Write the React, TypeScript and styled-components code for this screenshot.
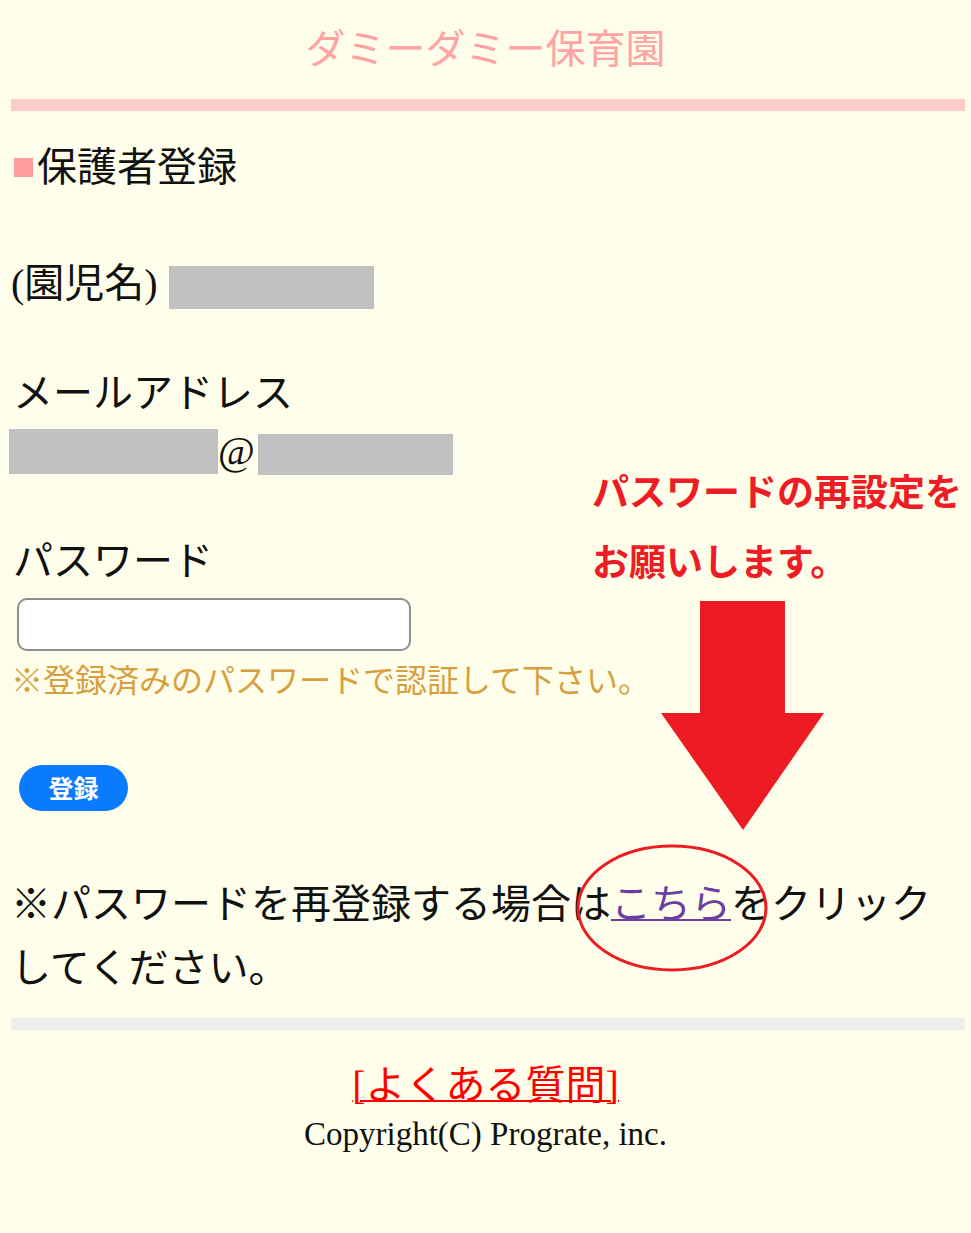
import styled, { createGlobalStyle } from 'styled-components';

const GlobalStyle = createGlobalStyle`
  body {
    margin: 0;
    background-color: #fffeeb;
  }
`;

const serif = `"Liberation Serif", "Noto Sans CJK JP", serif`;
const sans = `"Noto Sans CJK JP", "Noto Sans", sans-serif`;

const Page = styled.div`
  position: relative;
  min-height: 1233px;
  background-color: #fffeeb;
  font-family: ${serif};
  color: #111;
`;

const Header = styled.header`
  height: 99px;
  display: flex;
  align-items: center;
  justify-content: center;

  h1 {
    margin: 0;
    font-size: 40px;
    font-weight: 400;
    line-height: 50px;
    color: #ffa3a3;
  }
`;

const Bar = styled.div<{ $colour: string; $top?: number }>`
  height: 12px;
  margin: ${(p) => p.$top ?? 0}px 6px 0 11px;
  background-color: ${(p) => p.$colour};
`;

const Main = styled.main`
  padding: 0 6px 0 11px;
`;

const Heading = styled.h2`
  display: flex;
  align-items: center;
  margin: 28px 0 0;
  height: 50px;
  font-size: 40px;
  font-weight: 400;

  &::before {
    content: '';
    width: 19px;
    height: 19px;
    margin: 6px 4px 0 3px;
    background-color: #ff9c9c;
  }
`;

const Label = styled.div<{ $top: number }>`
  margin-top: ${(p) => p.$top}px;
  font-size: 40px;
  line-height: 50px;
  padding-left: 2px;
`;

const Row = styled.div<{ $top: number }>`
  display: flex;
  align-items: center;
  margin-top: ${(p) => p.$top}px;
  font-size: 40px;
  line-height: 50px;
`;

const Masked = styled.span<{ $w: number; $h: number; $shift?: number }>`
  display: inline-block;
  width: ${(p) => p.$w}px;
  height: ${(p) => p.$h}px;
  margin-top: ${(p) => p.$shift ?? 0}px;
  background-color: #c0c0c0;
`;

const PasswordInput = styled.input`
  display: block;
  box-sizing: border-box;
  width: 394px;
  height: 53px;
  margin: 11px 0 0 6px;
  border: 2px solid #8e8e8e;
  border-radius: 10px;
  background-color: #fff;
`;

const Hint = styled.p`
  margin: 10px 0 0;
  font-size: 32px;
  line-height: 40px;
  color: #d6a040;
`;

const SubmitButton = styled.button`
  display: block;
  margin: 64px 0 0 8px;
  padding: 0 0 3px;
  width: 109px;
  height: 46px;
  border: 0;
  border-radius: 23px;
  background-color: #0a7bff;
  color: #fff;
  font-family: ${sans};
  font-size: 25px;
  font-weight: 700;
`;

const Notice = styled.p`
  margin: 62px 0 0;
  font-size: 40px;
  line-height: 64px;

  a {
    color: #6b3fa0;
    text-decoration: underline;
    text-decoration-thickness: 2px;
  }
`;

const Footer = styled.footer`
  text-align: center;
`;

const FaqLink = styled.a`
  display: inline-block;
  margin-top: 32px;
  font-size: 40px;
  line-height: 48px;
  color: #ff0000;
  text-decoration: underline;
  text-decoration-thickness: 2px;
`;

const Copyright = styled.p`
  margin: 4px 0 0;
  font-size: 33px;
  line-height: 40px;
`;

const Callout = styled.div`
  position: absolute;
  left: 592px;
  top: 455px;
  font-family: ${sans};
  font-size: 37px;
  font-weight: 700;
  line-height: 70px;
  color: #ee1c24;
  white-space: nowrap;
`;

const Overlay = styled.svg<{ $left: number; $top: number }>`
  position: absolute;
  left: ${(p) => p.$left}px;
  top: ${(p) => p.$top}px;
`;

export default function App() {
  return (
    <Page>
      <GlobalStyle />
      <Header>
        <h1>ダミーダミー保育園</h1>
      </Header>
      <Bar $colour='#ffcccc' />

      <Main>
        <Heading>保護者登録</Heading>

        <Row $top={70}>
          (園児名)
          <Masked $w={205} $h={43} $shift={6} style={{ marginLeft: 11 }} />
        </Row>

        <Label $top={60}>メールアドレス</Label>
        <Row $top={7}>
          <Masked $w={209} $h={45} style={{ marginLeft: -2 }} />
          <span>@</span>
          <Masked $w={195} $h={41} $shift={6} style={{ marginLeft: 3 }} />
        </Row>

        <Label $top={61}>パスワード</Label>
        <PasswordInput type='password' />
        <Hint>※登録済みのパスワードで認証して下さい。</Hint>

        <SubmitButton>登録</SubmitButton>

        <Notice>
          ※パスワードを再登録する場合は<a href='#'>こちら</a>をクリックしてください。
        </Notice>
      </Main>

      <Bar $colour='#eeeeee' $top={17} />

      <Footer>
        <FaqLink href='#'>[よくある質問]</FaqLink>
        <Copyright>Copyright(C) Prograte, inc.</Copyright>
      </Footer>

      <Callout>
        パスワードの再設定を
        <br />
        お願いします。
      </Callout>

      <Overlay $left={661} $top={601} width='164' height='231' viewBox='0 0 164 231'>
        <polygon points='39,0 124,0 124,112 163,112 82,229 0,112 39,112' fill='#ed1c24' />
      </Overlay>

      <Overlay $left={575} $top={843} width='194' height='131' viewBox='0 0 194 131'>
        <ellipse cx='97' cy='65' rx='94' ry='62' fill='none' stroke='#ed1c24' strokeWidth='3' />
      </Overlay>
    </Page>
  );
}
